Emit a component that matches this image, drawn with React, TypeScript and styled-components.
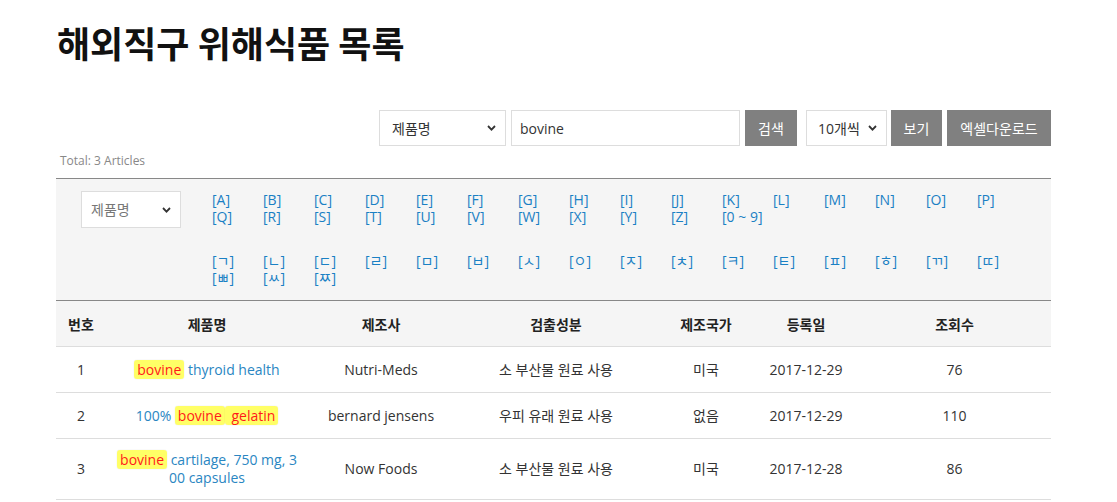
import React from "react";
import styled, { createGlobalStyle } from "styled-components";

const Global = createGlobalStyle`
  html, body { margin: 0; padding: 0; background: #fff; }
  body { font-family: "Open Sans", "Noto Sans CJK KR", sans-serif; color: #333; }
  * { box-sizing: border-box; }
`;

const Page = styled.div`
  width: 995px;
  margin-left: 56px;
  padding-top: 20px;
`;

const Title = styled.h1`
  margin: 0 0 0 1px;
  font-family: "Noto Sans CJK KR", sans-serif;
  font-size: 36px;
  line-height: 45px;
  font-weight: 700;
  color: #111;
`;

const SearchBar = styled.div`
  margin-top: 45px;
  display: flex;
  justify-content: flex-end;
  align-items: stretch;
  height: 36px;
`;

const SelectWrap = styled.div<{ $w: number; $ml?: number }>`
  position: relative;
  width: ${(p) => p.$w}px;
  margin-left: ${(p) => p.$ml ?? 0}px;
  height: 100%;
`;

const Select = styled.select<{ $pl?: number; $color?: string }>`
  appearance: none;
  -webkit-appearance: none;
  width: 100%;
  height: 100%;
  border: 1px solid #ddd;
  background: #fff;
  padding: 0 0 0 ${(p) => p.$pl ?? 12}px;
  font-family: "Open Sans", "Noto Sans CJK KR", sans-serif;
  font-size: 14px;
  color: ${(p) => p.$color ?? "#333"};
  outline: none;
`;

const Chevron = styled.svg`
  position: absolute;
  right: 10px;
  top: 50%;
  width: 9px;
  height: 6px;
  margin-top: -3px;
  pointer-events: none;
`;

const Input = styled.input`
  width: 229px;
  margin-left: 5px;
  height: 100%;
  border: 1px solid #ddd;
  padding: 0 0 0 8px;
  font-family: "Open Sans", "Noto Sans CJK KR", sans-serif;
  font-size: 14px;
  color: #333;
  outline: none;
`;

const Button = styled.button<{ $w: number; $ml: number }>`
  width: ${(p) => p.$w}px;
  margin-left: ${(p) => p.$ml}px;
  height: 100%;
  border: 0;
  background: #808080;
  color: #fff;
  font-family: "Noto Sans CJK KR", sans-serif;
  font-size: 14px;
  padding: 0;
`;

const Total = styled.div`
  margin-top: 5px;
  padding-left: 4px;
  font-size: 12px;
  line-height: 20px;
  color: #888;
`;

const FilterBox = styled.div`
  margin-top: 7px;
  border-top: 1px solid #888;
  background: #f5f5f5;
  display: flex;
  padding: 12px 0 14px 25px;
`;

const FilterSelectWrap = styled.div`
  position: relative;
  width: 100px;
  height: 37px;
  margin-right: 31px;
  flex: none;
`;

const Groups = styled.div`
  display: flex;
  flex-direction: column;
  gap: 27px;
`;

const LetterGrid = styled.ul`
  list-style: none;
  margin: 0;
  padding: 0;
  display: grid;
  grid-template-columns: repeat(16, 51px);
`;

const Letter = styled.li`
  font-size: 14px;
  line-height: 17px;
  color: #1a80c4;
  white-space: nowrap;
`;

const LetterLink = styled.a`
  color: inherit;
  text-decoration: none;
  font-family: "Open Sans", "Noto Sans CJK KR", sans-serif;
`;

const Table = styled.table`
  width: 100%;
  border-collapse: collapse;
  border-top: 1px solid #888;
  table-layout: fixed;
`;

const Th = styled.th<{ $w?: number }>`
  ${(p) => (p.$w ? `width: ${p.$w}px;` : "")}
  height: 46px;
  background: #f5f5f5;
  font-family: "Noto Sans CJK KR", sans-serif;
  font-size: 14px;
  font-weight: 700;
  color: #222;
  border-bottom: 1px solid #ddd;
  padding: 0;
`;

const Td = styled.td<{ $tall?: boolean; $px?: number }>`
  height: ${(p) => (p.$tall ? 61 : 46)}px;
  text-align: center;
  font-family: "Open Sans", "Noto Sans CJK KR", sans-serif;
  font-size: 14px;
  line-height: 18px;
  color: #333;
  border-bottom: 1px solid #ddd;
  padding: 0 ${(p) => p.$px ?? 6}px;
`;

const NameLink = styled.a`
  color: #2a86c2;
  text-decoration: none;
  word-break: break-all;
`;

const Mark = styled.span`
  background: #ffff66;
  color: #ff1a1a;
  border-radius: 3px;
  padding: 0 3px;
  box-shadow: 0 0 1px rgba(0, 0, 0, 0.2);
`;

const ChevronIcon = () => (
  <Chevron viewBox="0 0 9 6">
    <path d="M1 1 L4.5 4.6 L8 1" fill="none" stroke="#333" strokeWidth="1.8" />
  </Chevron>
);

const alpha = [
  "A","B","C","D","E","F","G","H","I","J","K","L","M","N","O","P",
  "Q","R","S","T","U","V","W","X","Y","Z","0 ~ 9",
];
const hangul = [
  "ㄱ","ㄴ","ㄷ","ㄹ","ㅁ","ㅂ","ㅅ","ㅇ","ㅈ","ㅊ","ㅋ","ㅌ","ㅍ","ㅎ","ㄲ","ㄸ",
  "ㅃ","ㅆ","ㅉ",
];

type Row = {
  no: number;
  name: React.ReactNode;
  maker: string;
  comp: string;
  country: string;
  date: string;
  views: number;
  tall?: boolean;
};

const rows: Row[] = [
  {
    no: 1,
    name: (<><Mark>bovine</Mark> thyroid health</>),
    maker: "Nutri-Meds",
    comp: "소 부산물 원료 사용",
    country: "미국",
    date: "2017-12-29",
    views: 76,
  },
  {
    no: 2,
    name: (<>100% <Mark>bovine</Mark><Mark> gelatin</Mark></>),
    maker: "bernard jensens",
    comp: "우피 유래 원료 사용",
    country: "없음",
    date: "2017-12-29",
    views: 110,
  },
  {
    no: 3,
    name: (<><Mark>bovine</Mark> cartilage, 750 mg, 300 capsules</>),
    maker: "Now Foods",
    comp: "소 부산물 원료 사용",
    country: "미국",
    date: "2017-12-28",
    views: 86,
    tall: true,
  },
];

export default function App() {
  return (
    <>
      <Global />
      <Page>
        <Title>해외직구 위해식품 목록</Title>
        <SearchBar>
          <SelectWrap $w={127}>
            <Select defaultValue="name">
              <option value="name">제품명</option>
            </Select>
            <ChevronIcon />
          </SelectWrap>
          <Input defaultValue="bovine" />
          <Button $w={52} $ml={5}>검색</Button>
          <SelectWrap $w={81} $ml={9}>
            <Select defaultValue="10" $pl={11}>
              <option value="10">10개씩</option>
            </Select>
            <ChevronIcon />
          </SelectWrap>
          <Button $w={51} $ml={4}>보기</Button>
          <Button $w={104} $ml={5}>엑셀다운로드</Button>
        </SearchBar>
        <Total>Total: 3 Articles</Total>
        <FilterBox>
          <FilterSelectWrap>
            <Select defaultValue="name" $pl={9} $color="#777">
              <option value="name">제품명</option>
            </Select>
            <ChevronIcon />
          </FilterSelectWrap>
          <Groups>
            <LetterGrid>
              {alpha.map((l) => (
                <Letter key={l}><LetterLink href="#">[{l}]</LetterLink></Letter>
              ))}
            </LetterGrid>
            <LetterGrid>
              {hangul.map((l) => (
                <Letter key={l}><LetterLink href="#">[{l}]</LetterLink></Letter>
              ))}
            </LetterGrid>
          </Groups>
        </FilterBox>
        <Table>
          <thead>
            <tr>
              <Th $w={50}>번호</Th>
              <Th $w={202}>제품명</Th>
              <Th $w={146}>제조사</Th>
              <Th $w={204}>검출성분</Th>
              <Th $w={96}>제조국가</Th>
              <Th $w={104}>등록일</Th>
              <Th>조회수</Th>
            </tr>
          </thead>
          <tbody>
            {rows.map((r) => (
              <tr key={r.no}>
                <Td $tall={r.tall}>{r.no}</Td>
                <Td $tall={r.tall} $px={9}><NameLink href="#">{r.name}</NameLink></Td>
                <Td $tall={r.tall}>{r.maker}</Td>
                <Td $tall={r.tall}>{r.comp}</Td>
                <Td $tall={r.tall}>{r.country}</Td>
                <Td $tall={r.tall}>{r.date}</Td>
                <Td $tall={r.tall}>{r.views}</Td>
              </tr>
            ))}
          </tbody>
        </Table>
      </Page>
    </>
  );
}
